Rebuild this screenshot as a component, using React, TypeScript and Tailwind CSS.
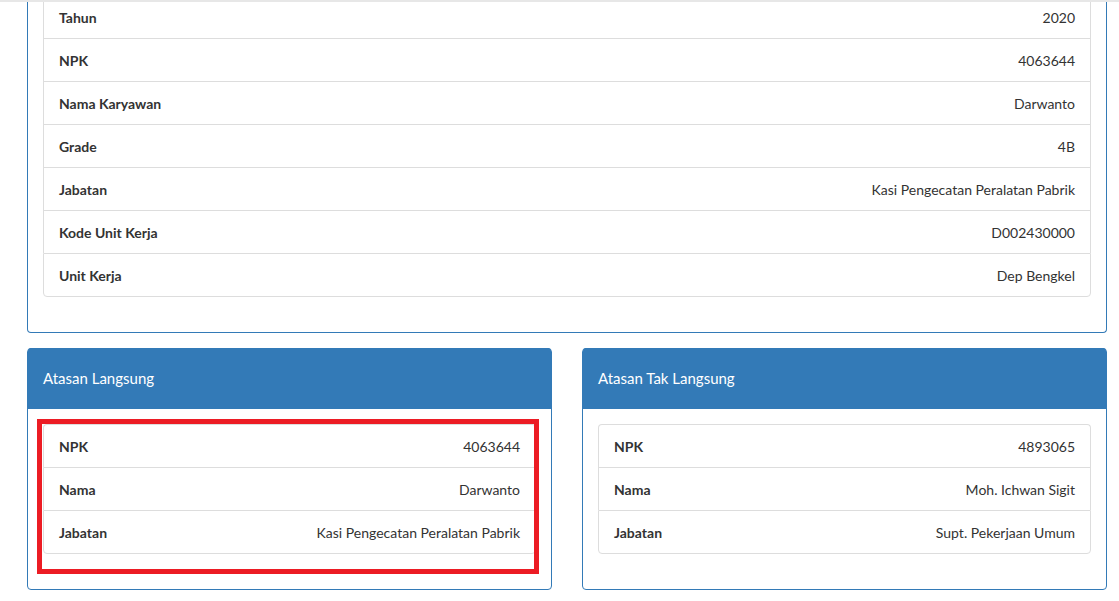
import React from "react";

type Row = { label: string; value: string };

const topRows: Row[] = [
  { label: "Tahun", value: "2020" },
  { label: "NPK", value: "4063644" },
  { label: "Nama Karyawan", value: "Darwanto" },
  { label: "Grade", value: "4B" },
  { label: "Jabatan", value: "Kasi Pengecatan Peralatan Pabrik" },
  { label: "Kode Unit Kerja", value: "D002430000" },
  { label: "Unit Kerja", value: "Dep Bengkel" },
];

const atasanLangsung: Row[] = [
  { label: "NPK", value: "4063644" },
  { label: "Nama", value: "Darwanto" },
  { label: "Jabatan", value: "Kasi Pengecatan Peralatan Pabrik" },
];

const atasanTakLangsung: Row[] = [
  { label: "NPK", value: "4893065" },
  { label: "Nama", value: "Moh. Ichwan Sigit" },
  { label: "Jabatan", value: "Supt. Pekerjaan Umum" },
];

function List({ rows }: { rows: Row[] }) {
  return (
    <div className="flex flex-col mb-[20px]">
      {rows.map((r, i) => (
        <div
          key={r.label}
          className={
            "flex items-center justify-between h-[43px] pt-[2px] px-[15px] border-x border-t border-[#dddddd] bg-white " +
            (i === 0 ? "rounded-t-[4px] " : "") +
            (i === rows.length - 1 ? "border-b h-[44px] rounded-b-[4px]" : "")
          }
        >
          <span className="font-bold text-[14px] leading-[20px] text-[#333333]">{r.label}</span>
          <span className="text-[14px] leading-[20px] text-[#333333]">{r.value}</span>
        </div>
      ))}
    </div>
  );
}

function Panel({ title, rows, highlight }: { title: string; rows: Row[]; highlight?: boolean }) {
  return (
    <div className="relative w-[525px] border border-[#337ab7] rounded-[4px] bg-white">
      <div className="h-[61px] bg-[#337ab7] px-[15px] flex items-center text-white text-[15px] font-['Lato',sans-serif] rounded-t-[3px] -mt-px">
        {title}
      </div>
      <div className="px-[15px] pt-[15px] pb-[15px]">
        <List rows={rows} />
      </div>
      {highlight && (
        <div className="absolute left-[9px] top-[70px] w-[502px] h-[155px] border-[5px] border-[#ec1c24] pointer-events-none" />
      )}
    </div>
  );
}

export default function App() {
  return (
    <div className="relative w-[1119px] h-[601px] overflow-hidden bg-white font-['Lato',sans-serif] text-[#333333]">
      <div className="absolute left-0 right-0 top-0 h-[2px] bg-[#e7e7e7]" />
      <div className="pl-[27px] w-[1107px]">
        <div className="border border-t-0 border-[#337ab7] rounded-b-[4px] px-[15px] pb-[15px] -mt-[5px]">
          <List rows={topRows} />
        </div>
        <div className="flex gap-[30px] mt-[15px]">
          <Panel title="Atasan Langsung" rows={atasanLangsung} highlight />
          <Panel title="Atasan Tak Langsung" rows={atasanTakLangsung} />
        </div>
      </div>
    </div>
  );
}
